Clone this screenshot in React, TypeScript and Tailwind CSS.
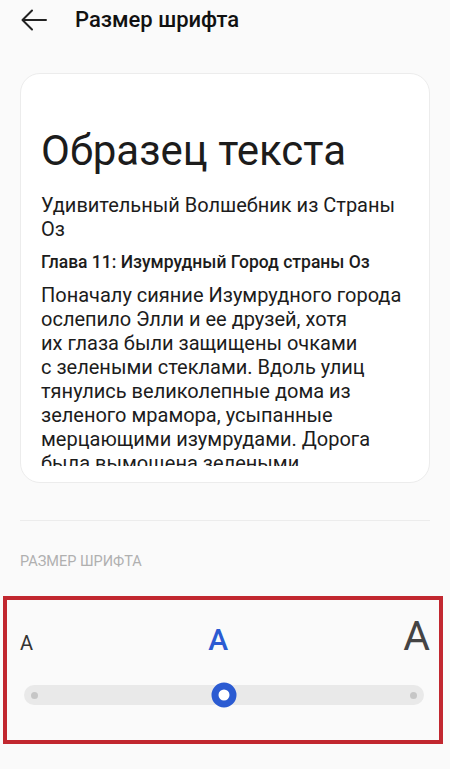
import React from "react";

const lines = [
  "Поначалу сияние Изумрудного города",
  "ослепило Элли и ее друзей, хотя",
  "их глаза были защищены очками",
  "с зелеными стеклами. Вдоль улиц",
  "тянулись великолепные дома из",
  "зеленого мрамора, усыпанные",
  "мерцающими изумрудами. Дорога",
  "была вымощена зелеными",
];

function BackArrow() {
  return (
    <svg width="26" height="22" viewBox="0 0 26 22" fill="none" className="shrink-0">
      <path d="M25 11H2M11 1.5L1.5 11L11 20.5" stroke="#222" strokeWidth="2" strokeLinecap="round" strokeLinejoin="round" />
    </svg>
  );
}

export default function App() {
  return (
    <div className="min-h-[769px] w-[450px] bg-[#fafafa] font-['Roboto','Noto_Sans',sans-serif] text-[#1a1a1a]">
      {/* header */}
      <div className="flex h-[40px] items-center pl-[21px]">
        <BackArrow />
        <h1 className="ml-[28px] text-[22px] font-medium leading-[40px] text-[#111]">Размер шрифта</h1>
      </div>

      {/* preview card */}
      <div className="mx-[20px] mt-[33px] h-[410px] rounded-[20px] border border-[#ececec] bg-white">
        <div className="h-[392px] overflow-hidden px-[20px] pt-[52px]">
          <h2 className="text-[42px] leading-[50px] text-[#1c1c1c]">Образец текста</h2>
          <p className="mt-[17px] text-[20px] leading-[24px] text-[#1c1c1c]">
            Удивительный Волшебник из Страны
            <br />
            Оз
          </p>
          <p className="mt-[10px] text-[17.5px] font-medium leading-[22px] text-[#1c1c1c]">
            Глава 11: Изумрудный Город страны Оз
          </p>
          <p className="mt-[10px] whitespace-nowrap text-[20px] leading-[24px] text-[#1c1c1c]">
            {lines.map((l) => (
              <span key={l} className="block">
                {l}
              </span>
            ))}
          </p>
        </div>
      </div>

      <div className="mx-[20px] mt-[37px] h-px bg-[#ececec]" />

      <div className="mt-[33px] px-[20px] text-[14.5px] leading-[16px] text-[#b0b0b0]">РАЗМЕР ШРИФТА</div>

      {/* size selector */}
      <div className="ml-[3px] mt-[26px] h-[148px] w-[440px] border-4 border-[#c1272f]">
        <div className="flex items-baseline justify-between pl-[13px] pr-[9px] pt-[21px]">
          <span className="text-[20px] leading-[30px] text-[#333]">A</span>
          <span className="text-[30px] font-medium leading-[30px] text-[#2b5bd2]">A</span>
          <span className="text-[41px] font-normal leading-[30px] text-[#444]">A</span>
        </div>
        <div className="relative ml-[17px] mr-[15px] mt-[27px] flex h-[20px] items-center justify-between rounded-full bg-[#e9e9e9] px-[7px]">
          <span className="h-[7px] w-[7px] rounded-full bg-[#c6c6c6]" />
          <span className="h-[7px] w-[7px] rounded-full bg-[#c6c6c6]" />
          <span className="absolute left-1/2 top-1/2 h-[25px] w-[25px] -translate-x-1/2 -translate-y-1/2 rounded-full border-[7px] border-[#2b5bd2] bg-white" />
        </div>
      </div>
    </div>
  );
}
